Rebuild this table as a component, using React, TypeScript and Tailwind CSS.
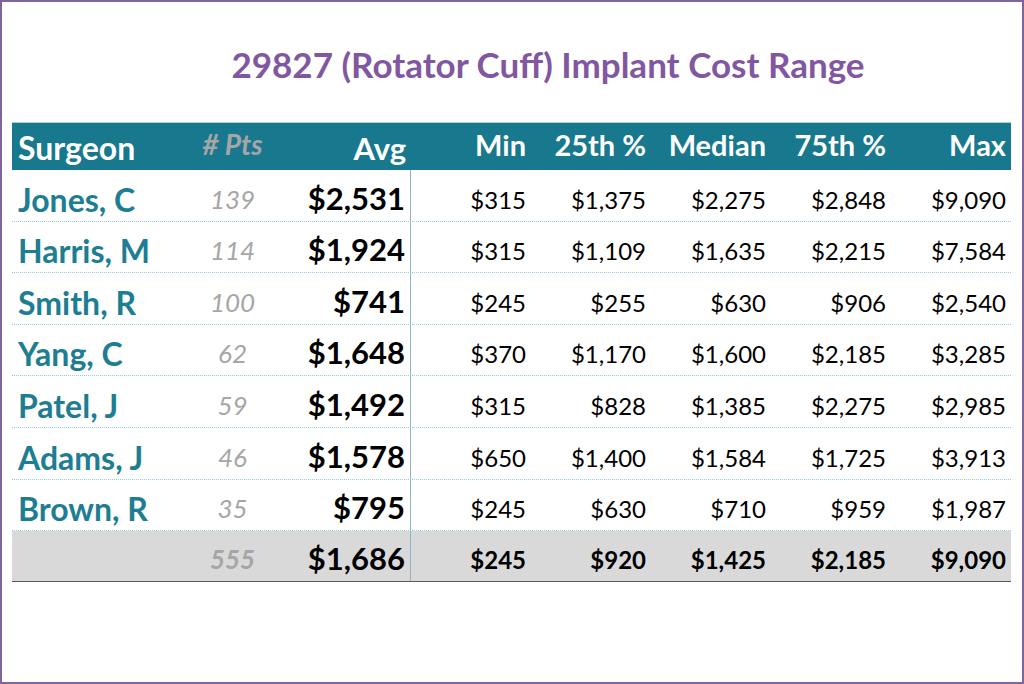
const rows = [
  { name: "Jones, C", pts: 139, avg: "$2,531", vals: ["$315", "$1,375", "$2,275", "$2,848", "$9,090"] },
  { name: "Harris, M", pts: 114, avg: "$1,924", vals: ["$315", "$1,109", "$1,635", "$2,215", "$7,584"] },
  { name: "Smith, R", pts: 100, avg: "$741", vals: ["$245", "$255", "$630", "$906", "$2,540"] },
  { name: "Yang, C", pts: 62, avg: "$1,648", vals: ["$370", "$1,170", "$1,600", "$2,185", "$3,285"] },
  { name: "Patel, J", pts: 59, avg: "$1,492", vals: ["$315", "$828", "$1,385", "$2,275", "$2,985"] },
  { name: "Adams, J", pts: 46, avg: "$1,578", vals: ["$650", "$1,400", "$1,584", "$1,725", "$3,913"] },
  { name: "Brown, R", pts: 35, avg: "$795", vals: ["$245", "$630", "$710", "$959", "$1,987"] },
]

const total = { pts: 555, avg: "$1,686", vals: ["$245", "$920", "$1,425", "$2,185", "$9,090"] }

const cols = ["Min", "25th %", "Median", "75th %", "Max"]

const grid = "grid grid-cols-[178px_85px_136px_120px_120px_120px_120px_120px]"

export default function App() {
  return (
    <div
      className="w-[1024px] h-[684px] border-2 border-[#8064a2] bg-white"
      style={{ fontFamily: "Lato, 'Open Sans', sans-serif" }}
    >
      <div className="ml-[10px] w-[999px]">
        <div className="h-[120px] pl-[73px] pt-[45px] text-center text-[35px] font-bold leading-none text-[#8157a2]">
          29827 (Rotator Cuff) Implant Cost Range
        </div>

        <div className={`${grid} h-[48px] bg-[#17788e] border-t border-[#a9d3de] text-white font-bold`}>
          <div className="flex items-end pb-[6px] pl-[6px] text-[32px] leading-none">Surgeon</div>
          <div className="flex items-end justify-center pb-[12px] text-[28px] leading-none italic text-[#a6a6a6]">
            # Pts
          </div>
          <div className="flex items-end justify-end pb-[6px] pr-[5px] text-[31px] leading-none">Avg</div>
          {cols.map((c) => (
            <div key={c} className="flex items-end justify-end pb-[11px] pr-[5px] text-[29px] leading-none">
              {c}
            </div>
          ))}
        </div>

        {rows.map((r) => (
          <div key={r.name} className={`${grid} h-[51.6px] border-b border-dotted border-[#92cddc]`}>
            <div className="flex items-end pb-[5px] pl-[6px] text-[32px] font-bold leading-none text-[#1d7d93]">
              {r.name}
            </div>
            <div className="flex items-end justify-center pb-[9px] text-[26px] italic leading-none text-[#a6a6a6]">
              {r.pts}
            </div>
            <div className="flex items-end justify-end pb-[7px] pr-[5px] text-[31px] font-bold leading-none text-black border-r border-[#8fb4c3]">
              {r.avg}
            </div>
            {r.vals.map((v, i) => (
              <div key={i} className="flex items-end justify-end pb-[9px] pr-[5px] text-[24px] leading-none text-black">
                {v}
              </div>
            ))}
          </div>
        ))}

        <div className={`${grid} h-[51px] bg-[#d9d9d9] border-b border-[#595959]`}>
          <div></div>
          <div className="flex items-end justify-center pb-[9px] text-[26px] font-bold italic leading-none text-[#a6a6a6]">
            {total.pts}
          </div>
          <div className="flex items-end justify-end pb-[7px] pr-[5px] text-[31px] font-bold leading-none text-black border-r border-[#8fb4c3]">
            {total.avg}
          </div>
          {total.vals.map((v, i) => (
            <div key={i} className="flex items-end justify-end pb-[9px] pr-[5px] text-[24px] font-bold leading-none text-black">
              {v}
            </div>
          ))}
        </div>
      </div>
    </div>
  )
}
